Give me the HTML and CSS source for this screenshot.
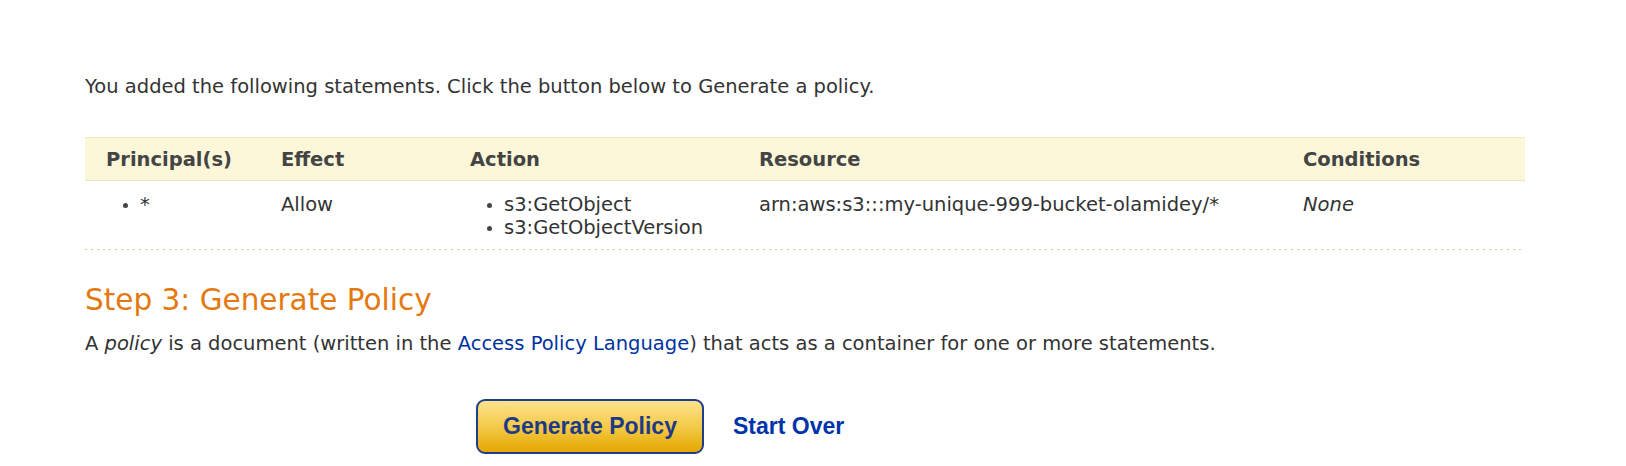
FILE: index.html
```html
<!DOCTYPE html>
<html>
<head>
<meta charset="utf-8">
<link rel="stylesheet" href="styles.css">
</head>
<body>
<div class="page">
  <p class="intro">You added the following statements. Click the button below to Generate a policy.</p>
  <div class="stmt-table">
    <div class="row head">
      <div class="cell">Principal(s)</div>
      <div class="cell">Effect</div>
      <div class="cell">Action</div>
      <div class="cell">Resource</div>
      <div class="cell">Conditions</div>
    </div>
    <div class="row body">
      <div class="cell"><ul class="blist"><li>*</li></ul></div>
      <div class="cell">Allow</div>
      <div class="cell"><ul class="blist"><li>s3:GetObject</li><li>s3:GetObjectVersion</li></ul></div>
      <div class="cell">arn:aws:s3:::my-unique-999-bucket-olamidey/*</div>
      <div class="cell"><em>None</em></div>
    </div>
  </div>
  <h2 class="step">Step 3: Generate Policy</h2>
  <p class="desc">A <em>policy</em> is a document (written in the <a class="link" href="#">Access Policy Language</a>) that acts as a container for one or more statements.</p>
  <div class="actions">
    <button class="gen-btn" type="button">Generate Policy</button>
    <a class="start-over" href="#">Start Over</a>
  </div>
</div>
</body>
</html>
```
FILE: styles.css
```css
html, body {
  margin: 0;
  padding: 0;
  background: #ffffff;
}
body {
  font-family: "DejaVu Sans", Verdana, sans-serif;
  font-size: 19.5px;
  color: #333333;
}
.page {
  padding: 0 101px 0 85px;
}
.intro {
  margin: 0;
  padding-top: 74px;
  line-height: 26px;
}
.stmt-table {
  margin-top: 37px;
}
.row {
  display: grid;
  grid-template-columns: 175px 189px 289px 544px 1fr;
}
.head {
  background: #fbf7d8;
  border-top: 1px solid #efeac4;
  border-bottom: 1px solid #e9e6c2;
  height: 41px;
  padding-top: 1px;
  box-sizing: content-box;
  align-items: center;
  font-weight: bold;
  color: #444444;
}
.cell {
  padding-left: 21px;
}
.body {
  padding-top: 12px;
  height: 57px;
  line-height: 23px;
  background: linear-gradient(to right, #c8cf8a 2px, transparent 2px) right bottom / 6px 1px repeat-x;
}
.blist {
  list-style: none;
  margin: 0;
  padding: 0 0 0 17px;
}
.blist li {
  position: relative;
  padding-left: 17px;
}
.blist li::before {
  content: "";
  position: absolute;
  left: 0;
  top: 10px;
  width: 5px;
  height: 5px;
  border-radius: 50%;
  background: #444444;
}
.step {
  margin: 0;
  padding-top: 31px;
  font-weight: normal;
  font-size: 29.5px;
  line-height: 38px;
  color: #e47911;
}
.desc {
  margin: 0;
  padding-top: 12px;
  line-height: 26px;
}
.link {
  color: #0033a0;
  text-decoration: none;
}
.actions {
  display: flex;
  align-items: center;
  padding: 42px 0 0 391px;
  gap: 29px;
}
.gen-btn {
  width: 228px;
  height: 55px;
  border: 2px solid #1e3d8a;
  border-radius: 9px;
  background: linear-gradient(#fde38d, #f2c742 55%, #e4a700);
  font-family: "Liberation Sans", Arial, sans-serif;
  font-weight: bold;
  font-size: 23px;
  color: #1f3a85;
  padding: 0;
}
.start-over {
  font-family: "Liberation Sans", Arial, sans-serif;
  font-weight: bold;
  font-size: 23px;
  color: #0033aa;
  text-decoration: none;
}
```
